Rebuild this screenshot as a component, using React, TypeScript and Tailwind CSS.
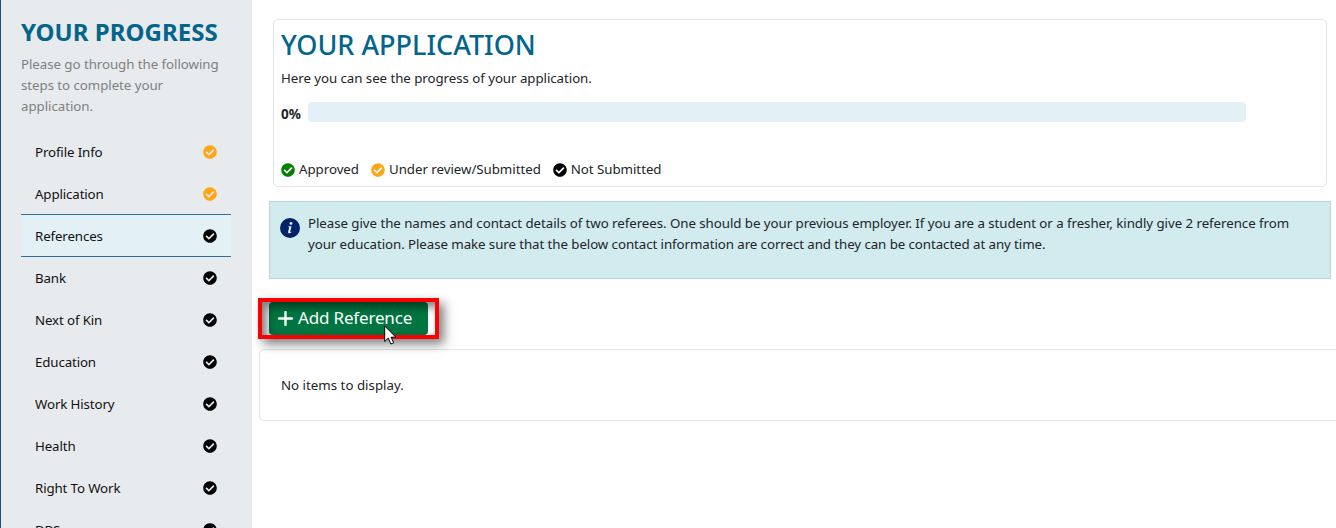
import { FaCheckCircle } from "react-icons/fa";

type Status = "approved" | "review" | "pending";

const statusColor: Record<Status, string> = {
  approved: "text-[#008000]",
  review: "text-[#ffa516]",
  pending: "text-black",
};

const steps: { label: string; status: Status; active?: boolean }[] = [
  { label: "Profile Info", status: "review" },
  { label: "Application", status: "review" },
  { label: "References", status: "pending", active: true },
  { label: "Bank", status: "pending" },
  { label: "Next of Kin", status: "pending" },
  { label: "Education", status: "pending" },
  { label: "Work History", status: "pending" },
  { label: "Health", status: "pending" },
  { label: "Right To Work", status: "pending" },
  { label: "DBS", status: "pending" },
];

function StatusIcon({ status }: { status: Status }) {
  return <FaCheckCircle className={`size-3.5 shrink-0 ${statusColor[status]}`} />;
}

function Sidebar() {
  return (
    <aside className="h-full w-[252px] shrink-0 border-l border-[#1d5470] bg-[#e8ebed] pl-5 pr-[21px]">
      <h2 className="mt-[15px] h-[34px] whitespace-nowrap text-[24px] font-bold leading-[33px] tracking-[0.03px] text-[#03658c]">
        YOUR PROGRESS
      </h2>
      <p className="mt-[5px] h-[63px] whitespace-nowrap leading-[21px] text-[#808080]">
        Please go through the following
        <br />
        steps to complete your
        <br />
        application.
      </p>
      <nav className="mt-3.5 flex flex-col tracking-[-0.13px]">
        {steps.map((s) => (
          <a
            key={s.label}
            className={`flex items-center justify-between px-3.5 text-[#111] ${
              s.active ? "-mt-px h-[43px] border-y border-[#2d7394] bg-[#e3f1f7]" : "h-[42px]"
            }`}
          >
            <span className="leading-5">{s.label}</span>
            <StatusIcon status={s.status} />
          </a>
        ))}
      </nav>
    </aside>
  );
}

function Legend({ status, label }: { status: Status; label: string }) {
  return (
    <div className="flex items-center gap-1">
      <StatusIcon status={status} />
      <span className="pb-px leading-5">{label}</span>
    </div>
  );
}

function ProgressCard() {
  return (
    <section className="ml-[21px] mt-[19px] h-[168px] w-[1054px] rounded-[5px] border border-[#e3e4e6] px-[7px]">
      <h1 className="mt-[7px] h-9 text-[27px] font-medium leading-9 tracking-normal text-[#03658c]">YOUR APPLICATION</h1>
      <p className="mt-[5px] h-[21px] leading-[21px]">Here you can see the progress of your application.</p>
      <div className="mt-[13px] flex h-5 items-center">
        <b className="w-[27px] pt-[3px] text-[13.5px] leading-5">0%</b>
        <div className="h-5 w-[938px] rounded bg-[#e3f0f6]" />
      </div>
      <div className="mt-[37px] flex h-[21px] items-center gap-[12px] tracking-[-0.04px]">
        <Legend status="approved" label="Approved" />
        <Legend status="review" label="Under review/Submitted" />
        <Legend status="pending" label="Not Submitted" />
      </div>
    </section>
  );
}

function InfoIcon() {
  return (
    <svg viewBox="0 0 20 20" className="mt-4 size-5 shrink-0">
      <circle cx="10" cy="10" r="10" fill="#03226a" />
      <circle cx="11" cy="5.4" r="1.4" fill="#e6f2f5" />
      <path
        d="M8 8.2h3.6l-1.5 5.5c-.1.5.2.5 1.1-.2l.4.4c-1.5 1.7-4 2-3.5-.1l1.1-4.4c.1-.5-.2-.6-1.2-.6z"
        fill="#e6f2f5"
      />
    </svg>
  );
}

function AddReference() {
  return (
    <div className="relative ml-1.5 mt-[19px] h-[41px] w-[181px] border-4 border-[#fb0000] pl-[7px] shadow-[5px_5px_10px_rgba(0,0,0,0.5)]">
      <button className="flex h-[33px] w-[159px] items-center gap-[5px] rounded bg-[#007542] pl-[9px] text-[17px] tracking-[-0.17px] text-white">
        <svg viewBox="0 0 15 15" className="size-[15px]">
          <path d="M7.5 1v13M1 7.5h13" stroke="white" strokeWidth="2.4" strokeLinecap="round" />
        </svg>
        <span className="whitespace-nowrap pb-px">Add Reference</span>
      </button>
      <div className="pointer-events-none absolute inset-0 shadow-[inset_5px_5px_10px_rgba(0,0,0,0.5)]" />
      <svg viewBox="0 0 13 20" className="absolute left-[122px] top-[23px] h-5 w-[13px]">
        <path d="M.7 1v15.5l3.6-3.4 2.6 5.9 2.8-1.2-2.6-5.6h4.8z" fill="white" stroke="black" strokeWidth="1" />
      </svg>
    </div>
  );
}

export default function App() {
  return (
    <div className="flex h-[528px] w-[1336px] overflow-hidden bg-white font-['Noto_Sans',sans-serif] text-[13.3px] tracking-[-0.055px] text-[#212529]">
      <Sidebar />
      <main className="min-w-0 flex-1">
        <ProgressCard />
        <section className="ml-[17px] mt-3.5 flex h-[78px] w-[1062px] gap-2 border border-[#b9d4da] bg-[#d1ebef] pl-2.5">
          <InfoIcon />
          <p className="mt-[11px] whitespace-nowrap leading-[21px]">
            Please give the names and contact details of two referees. One should be your previous employer. If you are a student or
            a fresher, kindly give 2 reference from
            <br />
            <span className="tracking-[-0.075px]">
              your education. Please make sure that the below contact information are correct and they can be contacted at any time.
            </span>
          </p>
        </section>
        <AddReference />
        <section className="ml-[7px] mt-[10px] flex h-[72px] w-[1090px] items-center rounded-[5px] border border-[#e3e4e6] pl-[21px] pt-0.5 tracking-normal">
          No items to display.
        </section>
      </main>
    </div>
  );
}
